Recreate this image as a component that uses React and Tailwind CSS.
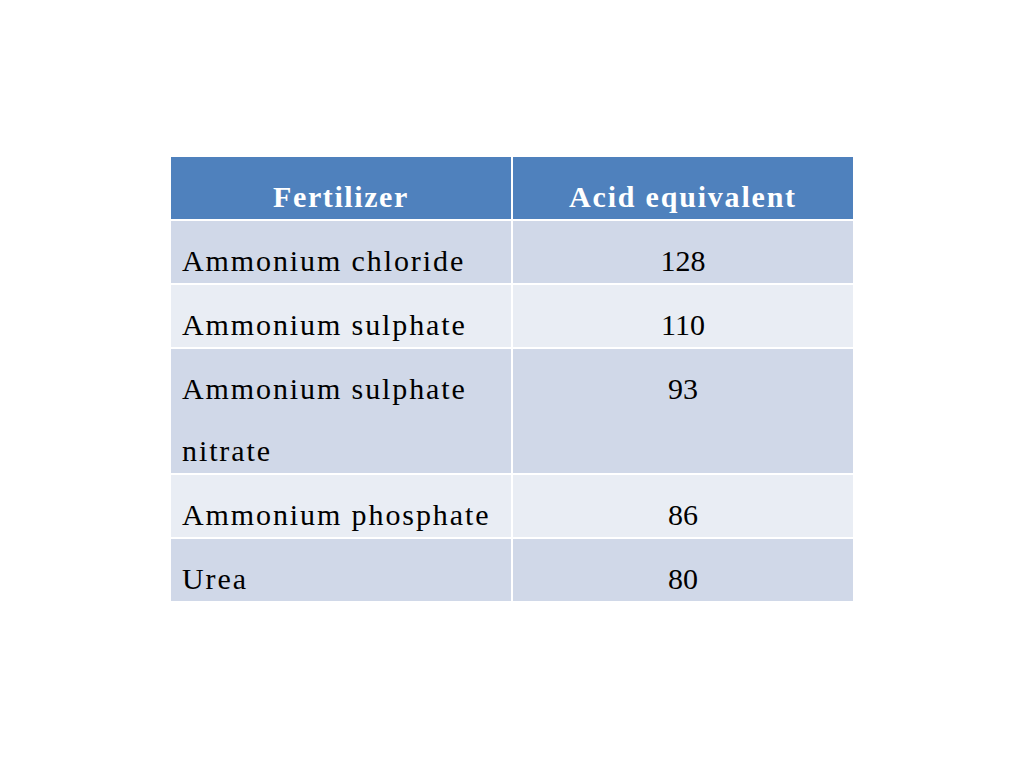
const rows = [
  { name: ["Ammonium chloride"], value: "128", tall: false },
  { name: ["Ammonium sulphate"], value: "110", tall: false },
  { name: ["Ammonium sulphate", "nitrate"], value: "93", tall: true },
  { name: ["Ammonium phosphate"], value: "86", tall: false },
  { name: ["Urea"], value: "80", tall: false },
]

const App = () => {
  return (
    <div
      className="w-[1024px] h-[768px] bg-white flex justify-center pt-[157px]"
      style={{ fontFamily: '"Liberation Serif", "Times New Roman", serif' }}
    >
      <div className="w-[682px] h-fit grid grid-cols-2 gap-[2px] bg-white">
        <div className="h-[62px] bg-[#4f81bd] text-white font-bold text-[30px] tracking-[1.6px] leading-[52px] pt-[14px] text-center">
          Fertilizer
        </div>
        <div className="h-[62px] bg-[#4f81bd] text-white font-bold text-[30px] tracking-[1.8px] leading-[52px] pt-[14px] text-center">
          Acid equivalent
        </div>
        {rows.map((r, i) => {
          const bg = i % 2 === 0 ? "bg-[#d0d8e8]" : "bg-[#e9edf4]"
          const h = r.tall ? "h-[124px]" : "h-[62px]"
          return [
            <div key={"n" + i} className={`${bg} ${h} overflow-hidden text-black text-[30px] tracking-[1.9px] leading-[62px] pt-[9px] pl-[11px]`}>
              {r.name.map((line) => (
                <div key={line}>{line}</div>
              ))}
            </div>,
            <div key={"v" + i} className={`${bg} ${h} overflow-hidden text-black text-[30px] leading-[62px] pt-[9px] text-center`}>
              {r.value}
            </div>,
          ]
        })}
      </div>
    </div>
  )
}

export default App
